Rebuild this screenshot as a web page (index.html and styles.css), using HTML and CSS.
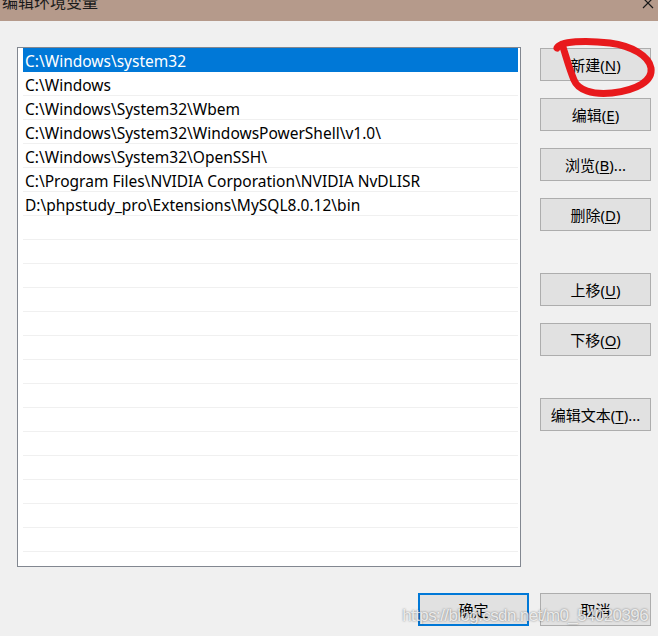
FILE: index.html
```html
<!DOCTYPE html>
<html lang="zh-CN">
<head>
    <meta charset="UTF-8">
    <title>编辑环境变量</title>
    <link rel="stylesheet" href="styles.css">
</head>
<body>
    <div class="titlebar">
        <span class="title">编辑环境变量</span>
        <svg class="close" width="12" height="10" viewBox="0 0 12 10">
            <path d="M1,-2 L11,8 M11,-2 L1,8" stroke="#1a1a1a" stroke-width="1.2" fill="none"/>
        </svg>
    </div>

    <div class="content">
        <div class="list">
            <div class="row selected">C:\Windows\system32</div>
            <div class="row">C:\Windows</div>
            <div class="row">C:\Windows\System32\Wbem</div>
            <div class="row">C:\Windows\System32\WindowsPowerShell\v1.0\</div>
            <div class="row">C:\Windows\System32\OpenSSH\</div>
            <div class="row">C:\Program Files\NVIDIA Corporation\NVIDIA NvDLISR</div>
            <div class="row">D:\phpstudy_pro\Extensions\MySQL8.0.12\bin</div>
            <div class="row"></div>
            <div class="row"></div>
            <div class="row"></div>
            <div class="row"></div>
            <div class="row"></div>
            <div class="row"></div>
            <div class="row"></div>
            <div class="row"></div>
            <div class="row"></div>
            <div class="row"></div>
            <div class="row"></div>
            <div class="row"></div>
            <div class="row"></div>
            <div class="row"></div>
            <div class="row"></div>
        </div>

        <div class="side">
            <button class="btn">新建(<u>N</u>)</button>
            <button class="btn">编辑(<u>E</u>)</button>
            <button class="btn">浏览(<u>B</u>)...</button>
            <button class="btn">删除(<u>D</u>)</button>
            <button class="btn group">上移(<u>U</u>)</button>
            <button class="btn">下移(<u>O</u>)</button>
            <button class="btn group">编辑文本(<u>T</u>)...</button>
        </div>
    </div>

    <div class="footer">
        <button class="btn default">确定</button>
        <button class="btn">取消</button>
    </div>

    <!-- 红色圈注 -->
    <svg class="circle" width="658" height="120" viewBox="0 0 658 120">
        <path d="M557,48 C560,41 586,40 610,43 C632,46 649,56 651,68 C653,81 637,90 612,93 C592,95 578,90 574,80 C569,68 566,56 562,44"
              stroke="#e8191c" stroke-width="7" fill="none" stroke-linecap="round" stroke-linejoin="round"/>
    </svg>

    <div class="watermark">https://blog.csdn.net/m0_54020396</div>
</body>
</html>
```

FILE: styles.css
```css
body {
    margin: 0;
    width: 658px;
    height: 636px;
    overflow: hidden;
    position: relative;
    background-color: #f0f0f0;
    font-family: "Noto Sans", "Noto Sans CJK SC", sans-serif;
    color: #000;
}
.titlebar {
    height: 21px;
    background-color: #b59a8b;
    display: flex;
    justify-content: space-between;
    align-items: flex-start;
    padding: 0 4px 0 2px;
    overflow: hidden;
}
.title {
    font-family: "Noto Sans CJK SC", sans-serif;
    font-size: 16px;
    line-height: 16px;
    margin-top: -7px;
    color: #1a1a1a;
}
.content {
    display: flex;
    margin-top: 26px;
    padding-left: 17px;
}
.list {
    width: 504px;
    height: 520px;
    box-sizing: border-box;
    border: 1px solid #828790;
    background-color: #fff;
    padding: 0 2px 0 5px;
    overflow: hidden;
}
.row {
    height: 24px;
    box-sizing: border-box;
    border-bottom: 1px solid #f0f0f0;
    padding: 2px 0 0 2px;
    font-size: 15.5px;
    line-height: 22px;
    white-space: nowrap;
    overflow: hidden;
}
.row.selected {
    background-color: #0078d7;
    border-bottom-color: #0078d7;
    color: #fff;
}
.side {
    display: flex;
    flex-direction: column;
    gap: 17px;
    margin-left: 19px;
    padding-top: 1px;
}
.btn {
    width: 111px;
    height: 33px;
    box-sizing: border-box;
    background-color: #e1e1e1;
    border: 1px solid #adadad;
    font-family: "Noto Sans", "Noto Sans CJK SC", sans-serif;
    font-size: 15px;
    color: #000;
    padding: 0;
    white-space: nowrap;
}
.btn u {
    text-underline-offset: 2px;
}
.btn.group {
    margin-top: 25px;
}
.btn.default {
    border: 2px solid #0078d7;
}
.footer {
    display: flex;
    justify-content: flex-end;
    gap: 11px;
    margin-top: 26px;
    padding-right: 7px;
}
.circle {
    position: absolute;
    left: 0;
    top: 0;
    pointer-events: none;
}
.watermark {
    position: absolute;
    right: 10px;
    top: 606px;
    font-family: "Liberation Sans", Arial, sans-serif;
    font-size: 17px;
    letter-spacing: -0.6px;
    color: rgba(255, 255, 255, 0.8);
    text-shadow: 0 0 2px rgba(60, 60, 60, 0.7);
    pointer-events: none;
}
```
